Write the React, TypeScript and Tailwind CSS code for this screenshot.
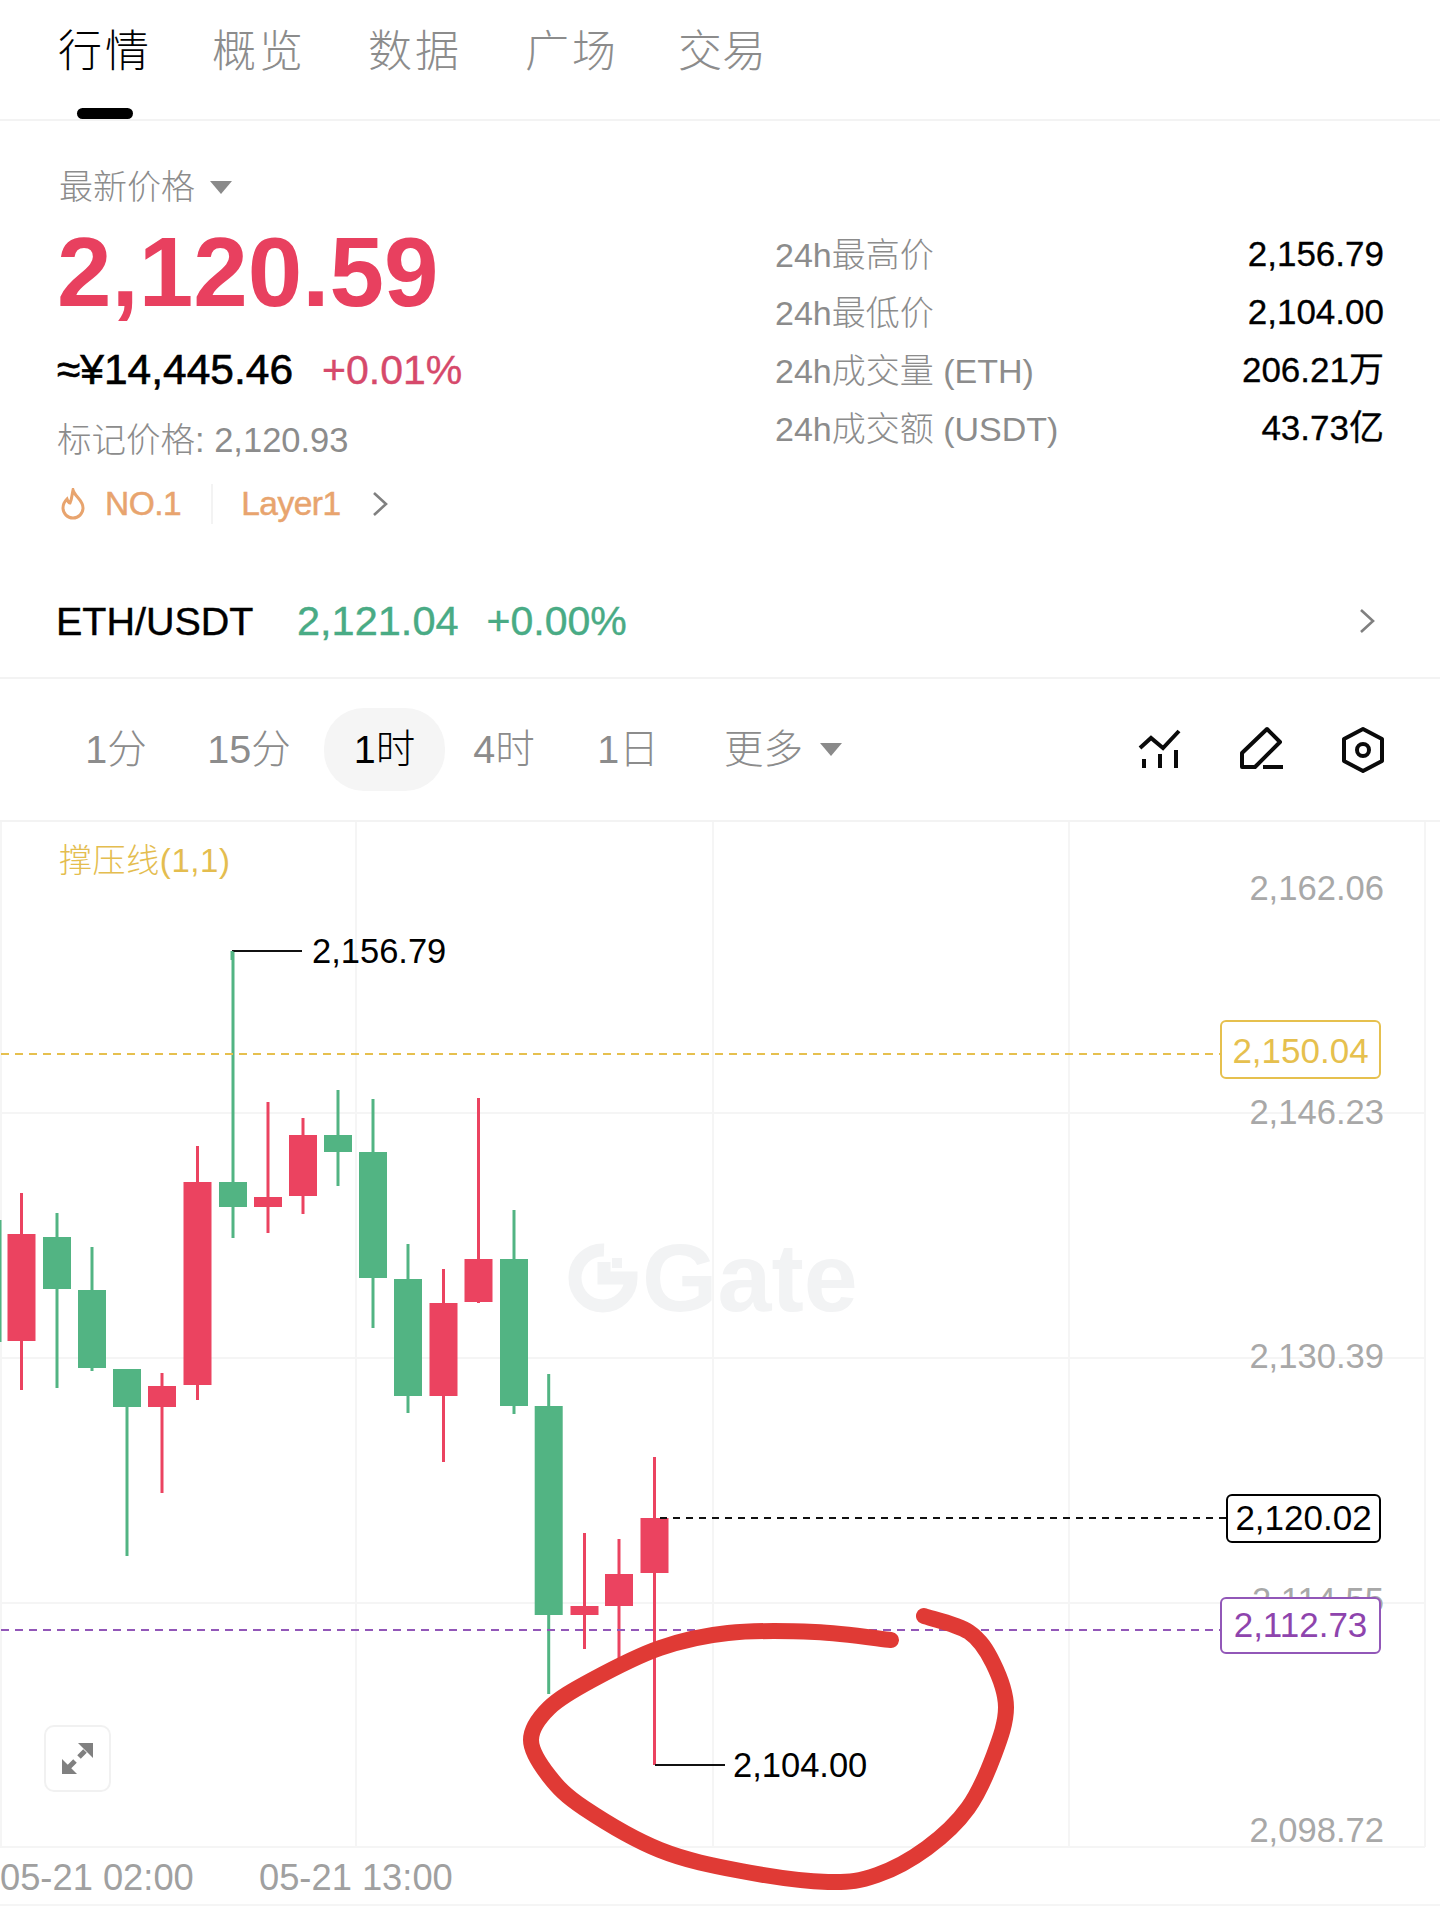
const RED = "#eb4360";
const GREEN = "#52b483";

type Candle = { x: number; up: boolean; wt: number; wb: number; bt: number; bb: number };

const candles: Candle[] = [
  { x: 0, up: false, wt: 1220, wb: 1342, bt: 0, bb: 0 },
  { x: 21.5, up: true, wt: 1193, wb: 1390, bt: 1234, bb: 1341 },
  { x: 57, up: false, wt: 1213, wb: 1388, bt: 1237, bb: 1289 },
  { x: 92, up: false, wt: 1247, wb: 1371, bt: 1290, bb: 1368 },
  { x: 127, up: false, wt: 1369, wb: 1556, bt: 1369, bb: 1407 },
  { x: 162, up: true, wt: 1373, wb: 1493, bt: 1386, bb: 1407 },
  { x: 197.5, up: true, wt: 1146, wb: 1400, bt: 1182, bb: 1385 },
  { x: 233, up: false, wt: 952, wb: 1238, bt: 1182, bb: 1207 },
  { x: 268, up: true, wt: 1102, wb: 1233, bt: 1197, bb: 1207 },
  { x: 303, up: true, wt: 1118, wb: 1214, bt: 1135, bb: 1196 },
  { x: 338, up: false, wt: 1090, wb: 1186, bt: 1135, bb: 1152 },
  { x: 373, up: false, wt: 1099, wb: 1328, bt: 1152, bb: 1278 },
  { x: 408, up: false, wt: 1244, wb: 1413, bt: 1279, bb: 1396 },
  { x: 443.5, up: true, wt: 1269, wb: 1462, bt: 1303, bb: 1396 },
  { x: 478.5, up: true, wt: 1098, wb: 1303, bt: 1259, bb: 1302 },
  { x: 514, up: false, wt: 1210, wb: 1414, bt: 1259, bb: 1406 },
  { x: 548.7, up: false, wt: 1374, wb: 1694, bt: 1406, bb: 1615 },
  { x: 584.5, up: true, wt: 1533, wb: 1649, bt: 1606, bb: 1615 },
  { x: 619, up: true, wt: 1539, wb: 1658, bt: 1574, bb: 1606 },
  { x: 654.5, up: true, wt: 1457, wb: 1765, bt: 1518, bb: 1573 },
];

const circlePoints: [number, number][] = [
  [891, 1640], [815, 1632], [728, 1633], [660, 1648], [592, 1680], [549, 1708], [531, 1740],
  [549, 1776], [584, 1808], [660, 1850], [741, 1871], [828, 1882], [877, 1875], [927, 1848],
  [968, 1808], [994, 1755], [1006, 1707], [993, 1663], [969, 1632], [924, 1616],
];

function smoothPath(p: [number, number][]) {
  let d = `M${p[0][0]} ${p[0][1]}`;
  for (let i = 0; i < p.length - 1; i++) {
    const a = p[Math.max(i - 1, 0)];
    const b = p[i];
    const c = p[i + 1];
    const e = p[Math.min(i + 2, p.length - 1)];
    const c1x = b[0] + (c[0] - a[0]) / 6;
    const c1y = b[1] + (c[1] - a[1]) / 6;
    const c2x = c[0] - (e[0] - b[0]) / 6;
    const c2y = c[1] - (e[1] - b[1]) / 6;
    d += `C${c1x} ${c1y} ${c2x} ${c2y} ${c[0]} ${c[1]}`;
  }
  return d;
}

const font = "[font-family:'Liberation_Sans','Noto_Sans_CJK_SC',sans-serif]";

function Caret({ className }: { className: string }) {
  return (
    <svg className={className} viewBox="0 0 22 13">
      <path d="M0 0H22L11 13Z" fill="#8a8a8a" />
    </svg>
  );
}

function Chevron({ className }: { className: string }) {
  return (
    <svg className={className} viewBox="0 0 16 26" fill="none" stroke="#808080" strokeWidth="2.6">
      <path d="M2 2L14 13L2 24" />
    </svg>
  );
}

function StatRow({ label, value }: { label: string; value: string }) {
  return (
    <div className="flex h-[58px] items-center justify-between">
      <span className="pt-[2px] text-[34px] leading-[40px] font-light text-[#8c8c8c]">{label}</span>
      <span className="text-[35px] leading-[40px] text-black [-webkit-text-stroke:0.3px_black]">{value}</span>
    </div>
  );
}

export default function App() {
  return (
    <div className={`flex h-[1918px] w-[1440px] flex-col overflow-hidden bg-white ${font}`}>
      {/* Tabs */}
      <div className="relative flex h-[121px] shrink-0 items-start border-b-2 border-[#f3f3f3] pt-[27px] pl-[58px] text-[44px] leading-[50px] font-light tracking-[3px] text-[#8c8c8c]">
        <span className="w-[154px] text-black">行情</span>
        <span className="w-[156px]">概览</span>
        <span className="w-[157px]">数据</span>
        <span className="w-[153px]">广场</span>
        <span className="tracking-[0px]">交易</span>
        <div className="absolute top-[108px] left-[77px] h-[11px] w-[56px] rounded-full bg-black" />
      </div>

      {/* Price overview */}
      <div className="flex h-[439px] shrink-0">
        <div className="pt-[46px] pl-[57px]">
          <div className="ml-[2px] flex h-[40px] items-center text-[34px] font-light text-[#8c8c8c]">
            最新价格
            <Caret className="ml-[15px] h-[13px] w-[22px]" />
          </div>
          <div className="mt-[15px] text-[98px] leading-[100px] font-bold text-[#e8405f]">2,120.59</div>
          <div className="mt-[23px] flex h-[50px] items-center leading-[50px]">
            <span className="text-[42.5px] text-black [-webkit-text-stroke:0.6px_black]">≈¥14,445.46</span>
            <span className="ml-[29px] text-[41px] text-[#d6496b] [-webkit-text-stroke:0.4px_#d6496b]">+0.01%</span>
          </div>
          <div className="mt-[23px] h-[44px] text-[34.5px] leading-[44px] font-light text-[#8c8c8c]">
            标记价格: 2,120.93
          </div>
          <div className="mt-[20px] flex h-[44px] items-center text-[33.5px] tracking-[-0.5px] text-[#e8a46e] [-webkit-text-stroke:0.5px_#e8a46e]">
            <svg className="ml-[3px] h-[32px] w-[26px]" viewBox="0 0 26 32" fill="none" stroke="#e8a46e" strokeWidth="3">
              <path d="M13 2C15 9 23 12 23 20A10 10 0 0 1 3 20C3 16 5 13 7 11C8 14 9 15 10 15C12 11 12 6 13 2Z" />
            </svg>
            <span className="ml-[19px]">NO.1</span>
            <div className="ml-[30px] h-[40px] w-[2px] bg-[#f3f3f3]" />
            <span className="ml-[28px]">Layer1</span>
            <Chevron className="ml-[31px] h-[26px] w-[16px]" />
          </div>
        </div>
        <div className="mt-[104px] mr-[56px] ml-auto h-fit w-[609px]">
          <StatRow label="24h最高价" value="2,156.79" />
          <StatRow label="24h最低价" value="2,104.00" />
          <StatRow label="24h成交量 (ETH)" value="206.21万" />
          <StatRow label="24h成交额 (USDT)" value="43.73亿" />
        </div>
      </div>

      {/* Pair row */}
      <div className="flex h-[119px] shrink-0 items-center border-b-2 border-[#f3f3f3] pt-[4px] pl-[56px] leading-[50px]">
        <span className="w-[241px] text-[39.5px] text-black [-webkit-text-stroke:0.4px_black]">ETH/USDT</span>
        <span className="text-[41.5px] text-[#49ab85] [-webkit-text-stroke:0.4px_#49ab85]">2,121.04</span>
        <span className="ml-[28px] text-[41px] text-[#49ab85] [-webkit-text-stroke:0.4px_#49ab85]">+0.00%</span>
        <Chevron className="mr-[65px] ml-auto h-[26px] w-[16px]" />
      </div>

      {/* Intervals */}
      <div className="flex h-[143px] shrink-0 items-center border-b-2 border-[#f3f3f3] pl-[56px] text-[39.5px] font-light text-[#8c8c8c]">
        <span className="w-[120px] text-center">1分</span>
        <span className="mr-[2px] w-[146px] text-center">15分</span>
        <span className="flex h-[83px] w-[121px] items-center justify-center rounded-[40px] bg-[#f5f5f5] text-black">1时</span>
        <span className="w-[118px] text-center">4时</span>
        <span className="w-[128px] pl-[2px] text-center">1日</span>
        <span className="ml-[33px]">更多</span>
        <Caret className="ml-[17px] h-[13px] w-[22px]" />
        <div className="mr-[53px] ml-auto flex gap-[54px]">
          <svg className="h-[48px] w-[48px]" viewBox="1134 726 48 48" fill="none" stroke="#0a0a0a" strokeWidth="4">
            <path d="M1139 748L1150 738L1162 748L1178 731" />
            <path d="M1143 759V768M1159 754V768M1175 750V768" />
          </svg>
          <svg className="h-[48px] w-[48px]" viewBox="1237 726 48 48" fill="none" stroke="#0a0a0a" strokeWidth="4">
            <path d="M1242 753L1267 729L1280 742L1255 767H1242Z" strokeLinejoin="round" />
            <path d="M1263 767H1283" />
          </svg>
          <svg className="h-[48px] w-[48px]" viewBox="1339 726 48 48" fill="none" stroke="#0a0a0a" strokeWidth="4">
            <path d="M1363 729L1382 739V761L1363 771L1344 761V739Z" strokeLinejoin="round" />
            <circle cx="1363" cy="750" r="6" />
          </svg>
        </div>
      </div>

      {/* Chart */}
      <div className="relative flex-1">
        <div className="absolute top-[420px] left-[642px] text-[97px] leading-[72px] font-bold text-[#f2f3f4]">Gate</div>
        <svg className="absolute inset-0 h-[1096px] w-[1440px]" viewBox="0 822 1440 1096" fill="none">
          <g stroke="#f5f5f5" strokeWidth="2">
            <path d="M1 822V1847M356 822V1847M713 822V1847M1069 822V1847M1425 822V1847" />
            <path d="M0 1113H1425M0 1358H1425M0 1603H1425M0 1847H1425M0 1905H1440" />
          </g>
          <path d="M604 1250A28 28 0 1 0 631 1278H604V1262" stroke="#f2f3f4" strokeWidth="13" />
          <path d="M612 1258H622V1268H612Z" fill="#f2f3f4" />
          {candles.map((c, i) => (
            <g key={i} fill={c.up ? RED : GREEN} stroke={c.up ? RED : GREEN}>
              <path d={`M${c.x} ${c.wt}V${c.wb}`} strokeWidth="3" />
              {c.bb > 0 && <rect x={c.x - 14} y={c.bt} width="28" height={c.bb - c.bt} stroke="none" />}
            </g>
          ))}
          <path d="M1 1054H1220" stroke="#e6c04e" strokeWidth="2" strokeDasharray="8 6" />
          <path d="M1 1630H1220" stroke="#9257b8" strokeWidth="2" strokeDasharray="8 6" />
          <path d="M660 1518H1226" stroke="#111" strokeWidth="2" strokeDasharray="7 6" />
          <path d="M302 951H232" stroke="#111" strokeWidth="2" />
          <path d="M232 951V960" stroke={GREEN} strokeWidth="3" />
          <path d="M655 1765H725" stroke="#111" strokeWidth="2" />
          <path d={smoothPath(circlePoints)} stroke="#e03a35" strokeWidth="16" strokeLinecap="round" />
        </svg>

        <div className="absolute top-[19px] left-[59px] text-[33px] leading-[40px] font-light tracking-[0.6px] text-[#e4bd4f]">撑压线(1,1)</div>

        <div className="absolute top-[46px] right-[56px] text-[34.6px] leading-[40px] text-[#a8a8a8]">2,162.06</div>
        <div className="absolute top-[270px] right-[56px] text-[34.6px] leading-[40px] text-[#a8a8a8]">2,146.23</div>
        <div className="absolute top-[514px] right-[56px] text-[34.6px] leading-[40px] text-[#a8a8a8]">2,130.39</div>
        <div className="absolute top-[758px] right-[56px] text-[34.6px] leading-[40px] text-[#a8a8a8]">2,114.55</div>
        <div className="absolute top-[988px] right-[56px] text-[34.6px] leading-[40px] text-[#a8a8a8]">2,098.72</div>

        <div className="absolute top-[109px] left-[312px] text-[34.5px] leading-[40px] text-black">2,156.79</div>
        <div className="absolute top-[923px] left-[733px] text-[34.5px] leading-[40px] text-black">2,104.00</div>

        <div className="absolute top-[198px] right-[59px] flex h-[59px] w-[161px] items-center justify-center rounded-[6px] border-2 border-[#e6c04e] bg-white pt-[3px] text-[35px] text-[#e6c04e]">
          2,150.04
        </div>
        <div className="absolute top-[672px] right-[59px] flex h-[49px] w-[155px] items-center justify-center rounded-[6px] border-2 border-black bg-white text-[35px] text-black">
          2,120.02
        </div>
        <div className="absolute top-[775px] right-[59px] flex h-[57px] w-[161px] items-center justify-center rounded-[6px] border-2 border-[#9257b8] bg-white text-[35px] text-[#8e44ad]">
          2,112.73
        </div>

        <div className="absolute top-[903px] left-[44px] flex h-[67px] w-[67px] items-center justify-center rounded-[10px] border-2 border-[#f1f1f1] bg-white">
          <svg className="h-[36px] w-[36px]" viewBox="60 1741 36 36" fill="#808080" stroke="none">
            <path d="M93 1743V1758L78 1743Z" />
            <path d="M62 1774V1759L77 1774Z" />
            <path d="M85 1751L79 1757M69 1767L75 1761" stroke="#808080" strokeWidth="5" />
          </svg>
        </div>

        <div className="absolute top-[1036px] left-0 text-[36.3px] leading-[40px] text-[#a0a0a0]">05-21 02:00</div>
        <div className="absolute top-[1036px] left-[259px] text-[36.3px] leading-[40px] text-[#a0a0a0]">05-21 13:00</div>
      </div>
    </div>
  );
}
